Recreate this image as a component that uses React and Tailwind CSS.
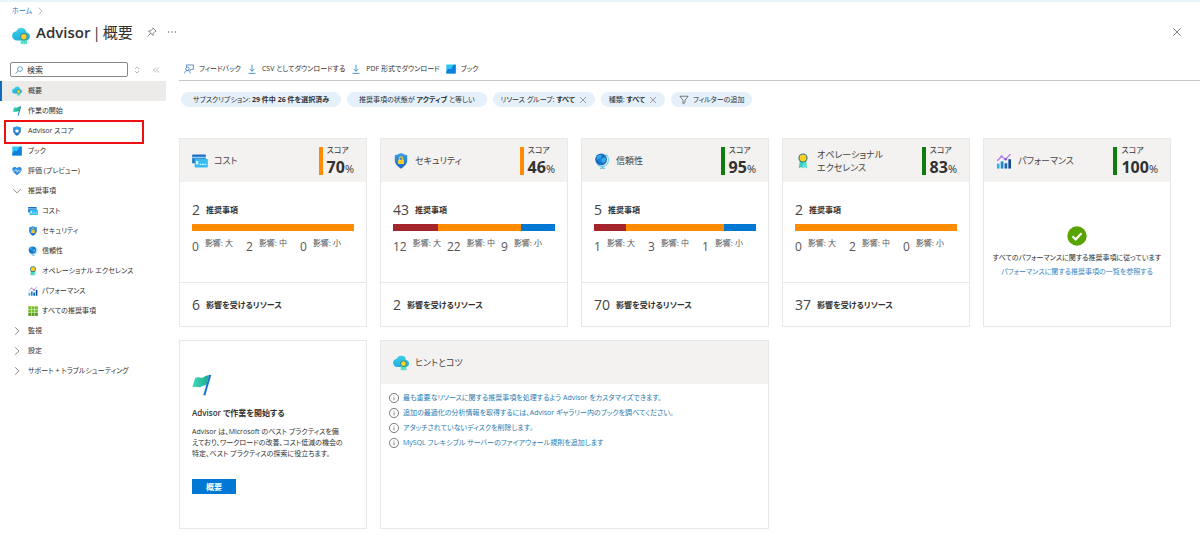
import { useId } from "react";

const FONT = "font-['Open_Sans','Noto_Sans_CJK_JP',sans-serif]";

function CloudIcon({ className }) {
  const id = useId();
  return (
    <svg viewBox="0 0 18 18" className={className} aria-hidden="true">
      <defs>
        <linearGradient id={id} x1="0" y1="0" x2="0" y2="1">
          <stop offset="0" stopColor="#3bcfe8" />
          <stop offset="1" stopColor="#1fb0e0" />
        </linearGradient>
      </defs>
      <path d="M18 9.300a3.900 3.900 0 0 0-3.500-3.800A5 5 0 0 0 9.300.9a5.200 5.200 0 0 0-5 3.400A4.800 4.800 0 0 0 .1 8.900a4.900 4.900 0 0 0 5.100 4.600h8.700A4.100 4.100 0 0 0 18 9.300z" fill={`url(#${id})`} />
      <path d="M8.700 12.200v5.300l1.700-1 1.200 1.200.5-5.300zM15 12.200v5.300l-1.700-1-1.200 1.200-.4-5.300z" fill="#4fe0c9" />
      <circle cx="11.800" cy="9.800" r="3.700" fill="#3b8a80" />
      <circle cx="11.800" cy="9.800" r="2.700" fill="#ffd02e" />
    </svg>
  );
}

function FlagIcon({ className }) {
  const id = useId();
  return (
    <svg viewBox="0 0 18 20" className={className} aria-hidden="true">
      <defs>
        <linearGradient id={id} x1="0" y1="0" x2="1" y2="0">
          <stop offset="0" stopColor="#3fdcba" />
          <stop offset="1" stopColor="#1ba98f" />
        </linearGradient>
      </defs>
      <path d="M2.800 3.600c2.800-1.800 4.600.4 7-.5 2-.8 3.400-2.300 5.700-2l-2.700 9.300c-2.400-.4-3.400.9-5.400 1.500-2.300.7-4-1.200-7.200.4z" fill={`url(#${id})`} />
      <path d="M15.600.6 17.400 1 12 19.500l-1.800-.5z" fill="#1673d0" />
    </svg>
  );
}

function ShieldIcon({ className, mark = "star" }) {
  const id = useId();
  return (
    <svg viewBox="0 0 18 18" className={className} aria-hidden="true">
      <defs>
        <linearGradient id={id} x1="0" y1="0" x2="0" y2="1">
          <stop offset="0" stopColor="#3aa0ea" />
          <stop offset="1" stopColor="#1a68c4" />
        </linearGradient>
      </defs>
      <path d="M16 8.400c0 4.600-5.500 8.300-6.700 9a.6.6 0 0 1-.6 0C7.500 16.700 2 13 2 8.400V2.900c0-.3.200-.6.600-.6C6.900 2.200 5.900.4 9 .4s2.100 1.800 6.400 1.900c.4 0 .6.300.6.600z" fill={`url(#${id})`} />
      {mark === "lock" ? (
        <>
          <path d="M7.100 8V6.300a1.900 1.900 0 0 1 3.800 0V8" fill="none" stroke="#f2c230" strokeWidth="1.300" />
          <rect x="5.800" y="7.500" width="6.400" height="5" rx=".6" fill="#ffd42f" />
          <circle cx="9" cy="10" r=".7" fill="#c98f10" />
        </>
      ) : (
        <path d="m9 4.500 1.300 2.800 3.100.3-2.300 2.100.6 3.100L9 11.200l-2.700 1.600.6-3.100-2.300-2.100 3.100-.3z" fill="#fff" />
      )}
    </svg>
  );
}

function BookIcon({ className }) {
  return (
    <svg viewBox="0 0 18 18" className={className} aria-hidden="true">
      <rect x=".5" y="1" width="17" height="16" rx=".8" fill="#32c5f4" />
      <path d="M.5 14.500c2-5.500 3.800-6.500 6-5.500 2.500 1.100 3.500-1.500 5-4.200C12.700 2.500 14.500 1 17.500 1v15.200a.8.8 0 0 1-.8.8H.5z" fill="#0f7fdc" />
    </svg>
  );
}

function HeartIcon({ className }) {
  return (
    <svg viewBox="0 0 18 18" className={className} aria-hidden="true">
      <path d="M9 16.500C3.500 12.300.5 9.500.5 6.200A4.400 4.400 0 0 1 5 1.700c1.800 0 3.200 1 4 2.500.8-1.500 2.200-2.500 4-2.500a4.400 4.400 0 0 1 4.500 4.500c0 3.300-3 6.100-8.500 10.300z" fill="#2f8be0" />
      <path d="M1 9h4l2-3 2.500 5.500L11.500 7l1.200 2H17" fill="none" stroke="#bfe6ff" strokeWidth="1.500" />
    </svg>
  );
}

function CostIcon({ className }) {
  return (
    <svg viewBox="0 0 18 16" className={className} aria-hidden="true">
      <rect x=".2" y=".8" width="15.300" height="9.700" rx=".6" fill="#1c6fc4" />
      <path d="M.2 3.200h15.300V5H.2z" fill="#8ed2f5" />
      <rect x="3" y="5.800" width="14.800" height="9.400" rx=".6" fill="#35bdf0" />
      <path d="M4.500 8h2.500v4H4.500zM8.500 11.200h2v1.200h-2zM11.300 11.200h2v1.200h-2zM14.100 11.200h2v1.200h-2z" fill="#d7f4ff" />
    </svg>
  );
}

function GlobeIcon({ className }) {
  const id = useId();
  return (
    <svg viewBox="0 0 18 18" className={className} aria-hidden="true">
      <defs>
        <radialGradient id={id}>
          <stop offset="0" stopColor="#1e8be0" />
          <stop offset="1" stopColor="#1466b8" />
        </radialGradient>
      </defs>
      <path d="M13.200 1.500a7.600 7.600 0 0 1-3.700 13.700A8 8 0 0 1 4 13.600" fill="none" stroke="#7fd3ee" strokeWidth="1.500" />
      <circle cx="8" cy="7.300" r="6.600" fill={`url(#${id})`} />
      <path d="M3 4.500c1.500-2 4-3 5.500-2.300L8 4.500 5.500 6 4 8.200zM9 6.500l3.500-1.700 1.300 2-1.500 3.400-2.300 1.300-1.300-2.600z" fill="#39a8ec" />
      <path d="M8.800 15.200h1.700v1.300h2v1.100H6.700v-1.100h2.100z" fill="#5bb9dc" />
    </svg>
  );
}

function RibbonIcon({ className }) {
  return (
    <svg viewBox="0 0 14 20" className={className} aria-hidden="true">
      <path d="M3 9.500 1.800 19l2.700-1.400L6.500 19.500 7.200 11z" fill="#3ccfc0" />
      <path d="M11 9.500 12.200 19l-2.700-1.400-2 1.900L6.800 11z" fill="#4fe0cf" />
      <circle cx="7" cy="6.300" r="5.700" fill="#2c7b86" />
      <circle cx="7" cy="6.300" r="4.300" fill="#ffcf22" />
    </svg>
  );
}

function PerfIcon({ className }) {
  return (
    <svg viewBox="0 0 18 18" className={className} aria-hidden="true">
      <path d="M1 12h3v5.500H1z" fill="#2fb4ea" />
      <path d="M5.300 9.500h3v8h-3z" fill="#1f86d6" />
      <path d="M9.600 11.500h3v6h-3z" fill="#1a66b8" />
      <path d="M13.900 7h3v10.500h-3z" fill="#134a96" />
      <path d="m1.500 8.700 4.800-5 4.500 3.600 5.500-6" fill="none" stroke="#a779e0" strokeWidth="1.300" />
      <circle cx="6.300" cy="3.900" r="1.400" fill="#b48ae8" />
      <circle cx="10.900" cy="7" r="1.400" fill="#8a55d0" />
    </svg>
  );
}

function GridIcon({ className }) {
  return (
    <svg viewBox="0 0 18 18" className={className} aria-hidden="true">
      {[0, 1, 2].map((r) =>
        [0, 1, 2].map((c) => (
          <rect key={`${r}${c}`} x={0.5 + c * 6} y={0.5 + r * 6} width="5.300" height="5.300" fill={r === 2 ? "#5c9e1e" : "#79bd2b"} />
        ))
      )}
    </svg>
  );
}

function Stroke({ className, d, w = 1.2, children }) {
  return (
    <svg viewBox="0 0 16 16" className={className} fill="none" stroke="currentColor" strokeWidth={w} aria-hidden="true">
      {d && <path d={d} />}
      {children}
    </svg>
  );
}

const Close = ({ className }) => <Stroke className={className} d="m2 2 12 12M14 2 2 14" />;
const Download = ({ className }) => <Stroke className={className} d="M8 1v10.500M4 7.700l4 4 4-4M2.500 15h11" w={1.4} />;

const NAV = [
  { label: "概要", Icon: CloudIcon, active: true },
  { label: "作業の開始", Icon: FlagIcon },
  { label: "Advisor スコア", Icon: ShieldIcon, marked: true },
  { label: "ブック", Icon: BookIcon },
  { label: "評価 (プレビュー)", Icon: HeartIcon },
  { label: "推奨事項", open: true },
  { label: "コスト", Icon: CostIcon, child: true },
  { label: "セキュリティ", Icon: ShieldIcon, mark: "lock", child: true },
  { label: "信頼性", Icon: GlobeIcon, child: true },
  { label: "オペレーショナル エクセレンス", Icon: RibbonIcon, child: true },
  { label: "パフォーマンス", Icon: PerfIcon, child: true },
  { label: "すべての推奨事項", Icon: GridIcon, child: true },
  { label: "監視", open: false },
  { label: "設定", open: false },
  { label: "サポート + トラブルシューティング", open: false },
];

function NavItem({ label, Icon, mark, active, marked, child, open }) {
  return (
    <li className={`relative ${active ? "border-l-2 border-[#0f6cbd] bg-[#edebe9] pl-2.5" : child ? "pl-7" : "pl-3"}`}>
      {Icon ? (
        <a
          href="#"
          className={`flex h-5 items-center whitespace-nowrap ${child ? "gap-1" : "gap-1.5"}`}
          aria-current={active ? "page" : undefined}
        >
          <Icon className="h-2.5 w-2.5 shrink-0" mark={mark} />
          {label}
        </a>
      ) : (
        <button type="button" className="flex h-5 w-full items-center gap-1.5 whitespace-nowrap text-left" aria-expanded={open}>
          <Stroke className="h-2.5 w-2.5 shrink-0 text-[#666]" d={open ? "m2 5 6 6 6-6" : "m5 2 6 6-6 6"} />
          {label}
        </button>
      )}
      {marked && <span className="pointer-events-none absolute -top-px left-1 right-[22px] h-6 border-2 border-[#ee1111]" />}
    </li>
  );
}

const CARDS = [
  { title: ["コスト"], Icon: CostIcon, score: 70, tone: "bg-[#ff8c00]", count: 2, impact: [0, 2, 0], resources: 6 },
  { title: ["セキュリティ"], Icon: ShieldIcon, mark: "lock", score: 46, tone: "bg-[#ff8c00]", count: 43, impact: [12, 22, 9], resources: 2 },
  { title: ["信頼性"], Icon: GlobeIcon, score: 95, tone: "bg-[#107c10]", count: 5, impact: [1, 3, 1], resources: 70 },
  { title: ["オペレーショナル", "エクセレンス"], Icon: RibbonIcon, score: 83, tone: "bg-[#107c10]", count: 2, impact: [0, 2, 0], resources: 37 },
  { title: ["パフォーマンス"], Icon: PerfIcon, score: 100, tone: "bg-[#107c10]" },
];

const LEVELS = [
  { name: "影響: 大", color: "bg-[#a4262c]" },
  { name: "影響: 中", color: "bg-[#ff8c00]" },
  { name: "影響: 小", color: "bg-[#0078d4]" },
];

function ScoreCard({ title, Icon, mark, score, tone, count, impact, resources }) {
  return (
    <section className="flex min-w-0 flex-col border border-[#e8e8e8] bg-white text-[8px]">
      <header className="flex h-[43px] items-center bg-[#f3f2f1] px-3">
        <Icon className="h-4 w-4 shrink-0" mark={mark} />
        <h2 className="ml-1.5 min-w-0 flex-1 text-[9px] leading-[13px] text-[#444]">
          {title.map((line) => (
            <span key={line} className="block">{line}</span>
          ))}
        </h2>
        <div className="flex items-center gap-1">
          <span className={`h-7 w-1 ${tone}`} />
          <div>
            <p className="text-[8px] leading-[14px]">スコア</p>
            <p className="text-[11px] leading-[20px]">
              <b className="text-[16px] font-bold">{score}</b>%
            </p>
          </div>
        </div>
      </header>
      {impact ? (
        <>
          <div className="flex-1 px-3 pt-[19px]">
            <p className="flex items-center gap-1.5 leading-[18px]">
              <span className="text-[14px] text-[#444]">{count}</span>
              <b className="font-bold">推奨事項</b>
            </p>
            <div className="mt-[5px] flex h-[7px]">
              {impact.map((n, i) => (
                <span key={i} className={LEVELS[i].color} style={{ flexGrow: n }} />
              ))}
            </div>
            <ul className="mt-1 grid grid-cols-[54px_54px_54px]">
              {LEVELS.map((l, i) => (
                <li key={l.name} className="flex gap-1.5 whitespace-nowrap text-[#555]">
                  <span className="pt-1 text-[12px] leading-[16px]">{impact[i]}</span>
                  <span className="leading-[16px]">{l.name}</span>
                </li>
              ))}
            </ul>
          </div>
          <p className="flex h-11 items-center gap-1.5 border-t border-[#e8e8e8] px-3">
            <span className="text-[14px] text-[#444]">{resources}</span>
            <b className="font-bold">影響を受けるリソース</b>
          </p>
        </>
      ) : (
        <div className="flex flex-1 flex-col items-center whitespace-nowrap pt-11 text-[7px]">
          <svg viewBox="0 0 20 20" className="h-5 w-5" aria-hidden="true">
            <circle cx="10" cy="10" r="9.700" fill="#57a300" />
            <path d="m5.500 10.200 3.200 3.200 5.800-6.200" fill="none" stroke="#fff" strokeWidth="2.200" />
          </svg>
          <p className="mt-[5px] leading-[14px]">すべてのパフォーマンスに関する推奨事項に従っています</p>
          <a href="#" className="leading-[14px] text-[#3a86c0]">パフォーマンスに関する推奨事項の一覧を参照する</a>
        </div>
      )}
    </section>
  );
}

const TIPS = [
  "最も重要なリソースに関する推奨事項を処理するよう Advisor をカスタマイズできます。",
  "追加の最適化の分析情報を取得するには、Advisor ギャラリー内のブックを調べてください。",
  "アタッチされていないディスクを削除します。",
  "MySQL フレキシブル サーバーのファイアウォール規則を追加します",
];

const PILL = "flex h-[15px] items-center gap-1 rounded-full bg-[#e5f0fa]";
const TOOL = "flex items-center gap-[5px]";

export default function App() {
  return (
    <div lang="ja" className={`min-h-screen border-t-2 border-[#e6f6fb] bg-white text-[7px] leading-[14px] text-[#323130] [font-feature-settings:'palt'] ${FONT}`}>
      <nav className="flex h-[18px] items-center gap-1 pl-3">
        <a href="#" className="text-[#1a73c7]">ホーム</a>
        <Stroke className="h-2 w-2 text-[#999]" d="m5 1 7 7-7 7" />
      </nav>
      <header className="flex h-6 items-center pl-3 pr-[18px]">
        <CloudIcon className="mt-2 h-[18px] w-[18px]" />
        <h1 className="ml-1.5 flex items-center gap-0.5 text-[15px] leading-6">
          <b className="font-semibold">Advisor</b>
          <span>|</span>
          <span>概要</span>
        </h1>
        <button type="button" aria-label="ピン留め" className="ml-3.5 text-[#555]">
          <Stroke className="h-2.5 w-2.5" d="m9.500 1.500 5 5-1.500.5-3 3-.5 3.500-7-7 3.500-.5 3-3zM6 10l-5 5" />
        </button>
        <button type="button" aria-label="その他" className="ml-2.5 text-[#666]">
          <svg viewBox="0 0 16 16" className="h-2.5 w-2.5" fill="currentColor" aria-hidden="true">
            <circle cx="2.500" cy="8" r="1.100" /><circle cx="8" cy="8" r="1.100" /><circle cx="13.500" cy="8" r="1.100" />
          </svg>
        </button>
        <button type="button" aria-label="閉じる" className="ml-auto text-[#555]">
          <Close className="h-2.5 w-2.5" />
        </button>
      </header>
      <div className="flex pt-3.5">
        <aside className="w-[166px] shrink-0 pt-1">
          <div className="mb-1 flex h-[15px] items-center pl-2.5">
            <label className="flex h-[15px] w-[118px] items-center gap-1 rounded-xs border border-[#8a8886] px-1">
              <Stroke className="h-2 w-2 shrink-0 text-[#3a86c0]" w={1.5} d="m1 15 5.500-5.500">
                <circle cx="10" cy="6" r="4.800" />
              </Stroke>
              <input type="search" aria-label="検索" placeholder="検索" className="w-full min-w-0 bg-transparent text-[8px] outline-none placeholder:text-[#323130]" />
            </label>
            <button type="button" aria-label="並べ替え" className="ml-[5px] text-[#888]">
              <Stroke className="h-2 w-2" d="m4 6 4-4 4 4M4 10l4 4 4-4" />
            </button>
            <button type="button" aria-label="折りたたむ" className="ml-[11px] text-[#888]">
              <Stroke className="h-2 w-2" d="M8 3 3 8l5 5M14 3 9 8l5 5" />
            </button>
          </div>
          <ul>
            {NAV.map((n) => (
              <NavItem key={n.label} {...n} />
            ))}
          </ul>
        </aside>
        <main className="ml-[13px] min-w-0 flex-1">
          <div className="flex h-[23px] items-center gap-1.5 whitespace-nowrap border-b border-[#c8c6c4] pl-[5px]">
            <button type="button" className={TOOL}>
              <Stroke className="h-2.5 w-2.5 text-[#2f6fae]" d="M4 5V1.500h11v7h-3l-2 2V8.500M1 15c0-3 1.800-4.500 4.500-4.500S10 12 10 15">
                <circle cx="5.500" cy="7.700" r="2.700" />
              </Stroke>
              フィードバック
            </button>
            <button type="button" className={TOOL}>
              <Download className="h-2.5 w-2.5 text-[#3a86c0]" />
              CSV としてダウンロードする
            </button>
            <button type="button" className={TOOL}>
              <Download className="h-2.5 w-2.5 text-[#3a86c0]" />
              PDF 形式でダウンロード
            </button>
            <button type="button" className={TOOL}>
              <BookIcon className="h-2.5 w-2.5" />
              ブック
            </button>
          </div>
          <div className="flex gap-1.5 whitespace-nowrap pl-0.5 pt-[11px]">
            <button type="button" className={`${PILL} px-3`}><span>サブスクリプション: <b>29 件中 26 件を選択済み</b></span></button>
            <button type="button" className={`${PILL} px-3`}><span>推奨事項の状態が <b>アクティブ</b> と等しい</span></button>
            <button type="button" className={`${PILL} px-2`}><span>リソース グループ: <b>すべて</b></span><Close className="h-2 w-2 text-[#666]" /></button>
            <button type="button" className={`${PILL} px-2`}><span>種類: <b>すべて</b></span><Close className="h-2 w-2 text-[#666]" /></button>
            <button type="button" className={`${PILL} px-2`}>
              <Stroke className="h-2.5 w-2.5 text-[#555]" d="M1.500 2h13L9.500 8.500V12l-3 2.500v-6z" />
              フィルターの追加
            </button>
          </div>
          <div className="mr-[29px] mt-[31px] grid grid-cols-5 gap-[13px] [grid-auto-rows:189px]">
            {CARDS.map((c) => (
              <ScoreCard key={c.title[0]} {...c} />
            ))}
            <section className="border border-[#e8e8e8] px-3 pt-[33px]">
              <FlagIcon className="h-[22px] w-5" />
              <h2 className="mt-2.5 text-[8px] font-semibold">Advisor で作業を開始する</h2>
              <p className="mt-1.5 whitespace-nowrap leading-[11px]">
                Advisor は、Microsoft のベスト プラクティスを備<br />
                えており、ワークロードの改善、コスト低減の機会の<br />
                特定、ベスト プラクティスの探索に役立ちます。
              </p>
              <button type="button" className="mt-5 h-[15px] w-11 bg-[#0078d4] text-[8px] font-semibold text-white">概要</button>
            </section>
            <section className="col-span-2 border border-[#e8e8e8]">
              <header className="flex h-[43px] items-center gap-1.5 bg-[#f3f2f1] px-3">
                <CloudIcon className="h-4 w-4" />
                <h2 className="text-[9px] text-[#444]">ヒントとコツ</h2>
              </header>
              <ul className="px-2 pt-1.5">
                {TIPS.map((t) => (
                  <li key={t} className="flex h-[15px] items-center gap-1 whitespace-nowrap">
                    <Stroke className="h-2.5 w-2.5 text-[#555]" d="M8 7v4.500M8 4.200v1.300">
                      <circle cx="8" cy="8" r="7.300" />
                    </Stroke>
                    <a href="#" className="text-[#2b7bb0]">{t}</a>
                  </li>
                ))}
              </ul>
            </section>
          </div>
        </main>
      </div>
    </div>
  );
}
